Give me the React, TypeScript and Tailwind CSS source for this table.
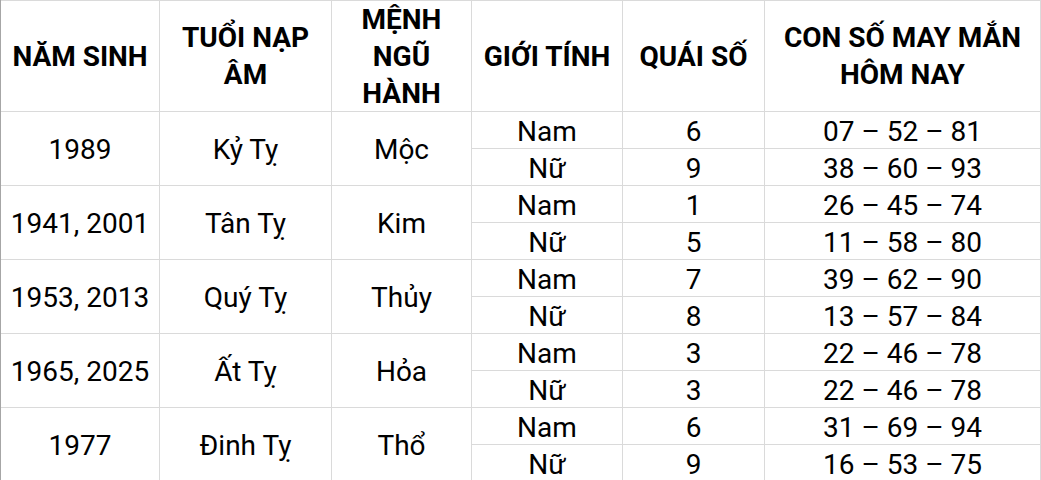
const rows = [
  { year: "1989", tuoi: "Kỷ Tỵ", menh: "Mộc", nam: ["6", "07 – 52 – 81"], nu: ["9", "38 – 60 – 93"] },
  { year: "1941, 2001", tuoi: "Tân Tỵ", menh: "Kim", nam: ["1", "26 – 45 – 74"], nu: ["5", "11 – 58 – 80"] },
  { year: "1953, 2013", tuoi: "Quý Tỵ", menh: "Thủy", nam: ["7", "39 – 62 – 90"], nu: ["8", "13 – 57 – 84"] },
  { year: "1965, 2025", tuoi: "Ất Tỵ", menh: "Hỏa", nam: ["3", "22 – 46 – 78"], nu: ["3", "22 – 46 – 78"] },
  { year: "1977", tuoi: "Đinh Tỵ", menh: "Thổ", nam: ["6", "31 – 69 – 94"], nu: ["9", "16 – 53 – 75"] },
];

const head = "flex items-center justify-center bg-white text-center font-bold leading-[37px]";
const cell = "flex items-center justify-center bg-white text-center pt-[3px]";
const big = "row-span-2 flex items-center justify-center bg-white text-center pt-[2px]";

export default function App() {
  return (
    <div
      className="w-[1041px] h-[480px] overflow-hidden bg-white text-black text-[28px]"
      style={{ fontFamily: "Roboto, 'Liberation Sans', sans-serif" }}
    >
      <div className="grid grid-cols-[158px_171px_139px_150px_141px_275px] grid-rows-[110px_repeat(10,36px)] gap-px bg-[#dadada] border-l border-[#a6a6a6] pt-px pr-px pb-px">
        <div className={head}>NĂM SINH</div>
        <div className={head}>
          TUỔI NẠP
          <br />
          ÂM
        </div>
        <div className={head}>
          MỆNH
          <br />
          NGŨ
          <br />
          HÀNH
        </div>
        <div className={head}>GIỚI TÍNH</div>
        <div className={head}>QUÁI SỐ</div>
        <div className={head}>
          CON SỐ MAY MẮN
          <br />
          HÔM NAY
        </div>
        {rows.map((r) => (
          <div key={r.year} className="contents">
            <div className={big}>{r.year}</div>
            <div className={big}>{r.tuoi}</div>
            <div className={big}>{r.menh}</div>
            <div className={cell}>Nam</div>
            <div className={cell}>{r.nam[0]}</div>
            <div className={cell}>{r.nam[1]}</div>
            <div className={cell}>Nữ</div>
            <div className={cell}>{r.nu[0]}</div>
            <div className={cell}>{r.nu[1]}</div>
          </div>
        ))}
      </div>
    </div>
  );
}
